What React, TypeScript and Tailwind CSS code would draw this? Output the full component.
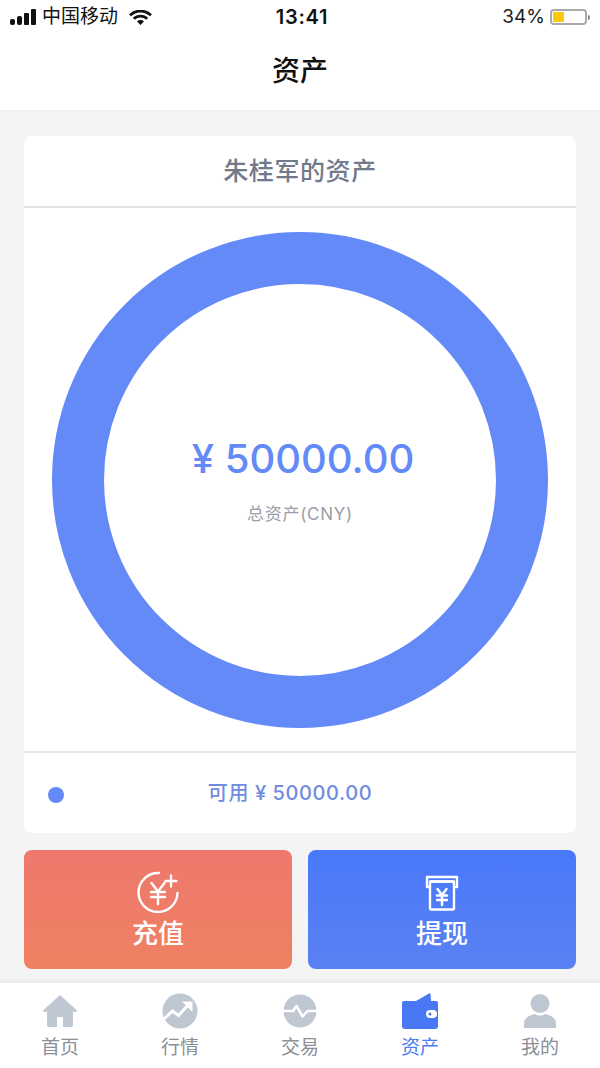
import React from "react";

const FONT = "font-['Inter','Noto_Sans_CJK_SC',sans-serif]";

const StatusBar = () => (
  <div className="relative flex h-[34px] items-center justify-between pl-[10px] pr-[10px]">
    <div className="flex items-center">
      <div className="flex items-end gap-[2px]">
        <span className="h-[6px] w-[5px] rounded-[2px] bg-[#111]" />
        <span className="h-[9px] w-[5px] rounded-[2px] bg-[#111]" />
        <span className="h-[12px] w-[5px] rounded-[1px] bg-[#111]" />
        <span className="h-[16px] w-[5px] rounded-[1px] bg-[#111]" />
      </div>
      <span className="ml-[6px] text-[19px] leading-[24px] text-[#111]">中国移动</span>
      <svg className="ml-[11px]" width="23" height="15" viewBox="0 0 23 15">
        <path d="M1 5.300a15 15 0 0 1 21 0" fill="none" stroke="#111" strokeWidth="2.800" />
        <path d="M4.800 8.800a9.500 9.500 0 0 1 13.400 0" fill="none" stroke="#111" strokeWidth="2.800" />
        <path d="M8 11.500a5 5 0 0 1 7 0L11.500 15z" fill="#111" />
      </svg>
    </div>
    <span className="absolute left-0 right-[-4px] text-center text-[20px] font-semibold leading-[24px] tracking-[0.8px] text-[#111]">13:41</span>
    <div className="flex items-center">
      <span className="text-[19px] leading-[24px] text-[#222]">34%</span>
      <div className="ml-[5px] h-[16px] w-[37px] rounded-[4px] border-2 border-[#aaa] p-[1px]">
        <div className="h-full w-[11px] rounded-[1px] bg-[#fcc90d]" />
      </div>
      <span className="ml-[1px] h-[5px] w-[2px] rounded-r-[2px] bg-[#888]" />
    </div>
  </div>
);

const RechargeIcon = () => (
  <svg width="42" height="42" viewBox="0 0 42 42" fill="none" stroke="#fff" strokeWidth="2.400" strokeLinecap="round">
    <path d="M22 2A19.500 19.500 0 1 0 40.500 22" />
    <path d="M14.500 12l6.500 8.500 6.500-8.500M14 21h14M14 26h14M21 20.500V33" />
    <path d="M28.500 10h11M34 4.500v11" />
  </svg>
);

const WithdrawIcon = () => (
  <svg width="34" height="36" viewBox="0 0 34 36" fill="none" stroke="#fff" strokeWidth="2.400" strokeLinejoin="round" strokeLinecap="round">
    <path d="M5 12H2V2h30v10h-3" />
    <path d="M5 6.500h24" />
    <rect x="5" y="6.500" width="24" height="28" rx="1.500" />
    <path d="M12.500 14l4.500 6 4.500-6M12 20.500h10M12 25h10M17 20v10" />
  </svg>
);

const HomeIcon = () => (
  <svg width="36" height="34" viewBox="0 0 36 34">
    <path d="M18 1L35 16.500l-.6 1.500H31v13a2 2 0 0 1-2 2H7a2 2 0 0 1-2-2V18H1.600L1 16.500z" fill="#bfc7d2" />
    <rect x="15" y="23" width="6" height="10" fill="#fff" />
  </svg>
);

const MarketIcon = () => (
  <svg width="36" height="36" viewBox="0 0 36 36">
    <circle cx="18" cy="18" r="17.500" fill="#bfc7d2" />
    <path d="M2 26l8.500-8 6 4.500L27 11" fill="none" stroke="#fff" strokeWidth="3" />
    <path d="M20 8.500h10.500V19z" fill="#fff" />
  </svg>
);

const TradeIcon = () => (
  <svg width="36" height="36" viewBox="0 0 36 36">
    <circle cx="18" cy="18" r="16.500" fill="#bfc7d2" />
    <path d="M0 18h11l3.500-5 6 10.500 5-5.500H36" fill="none" stroke="#fff" strokeWidth="2.600" strokeLinejoin="round" />
  </svg>
);

const WalletIcon = () => (
  <svg width="38" height="38" viewBox="0 0 38 38">
    <path d="M15 9L28 1.500a1 1 0 0 1 1.500.8L30 9z" fill="#4a78f5" />
    <path d="M3 9h32a2 2 0 0 1 2 2v23a3 3 0 0 1-3 3H4a3 3 0 0 1-3-3V11a2 2 0 0 1 2-2z" fill="#4a78f5" />
    <rect x="25" y="18" width="11" height="8" rx="4" fill="#fff" />
    <circle cx="29" cy="22" r="1.500" fill="#4a78f5" />
  </svg>
);

const UserIcon = () => (
  <svg width="34" height="36" viewBox="0 0 34 36">
    <circle cx="17" cy="10.500" r="9.500" fill="#bfc7d2" />
    <path d="M1 35v-5c0-5 6-8 11-9 3 2 7 2 10 0 5 1 11 4 11 9v5z" fill="#bfc7d2" />
  </svg>
);

const tabs = [
  { label: "首页", icon: <HomeIcon /> },
  { label: "行情", icon: <MarketIcon /> },
  { label: "交易", icon: <TradeIcon /> },
  { label: "资产", icon: <WalletIcon />, active: true },
  { label: "我的", icon: <UserIcon /> },
];

export default function App() {
  return (
    <div className={`flex h-[1068px] w-[600px] flex-col overflow-hidden bg-[#f4f4f4] ${FONT}`}>
      <div className="h-[111px] shrink-0 border-b border-[#efefef] bg-white">
        <StatusBar />
        <div className="mt-[19px] text-center text-[28px] font-medium leading-[36px] text-[#111]">资产</div>
      </div>

      <div className="flex-1 px-[24px] pt-[25px]">
        {/* asset card */}
        <div className="h-[697px] rounded-[8px] bg-white">
          <div className="flex h-[72px] items-center justify-center border-b-2 border-[#e3e4e8] text-[25px] font-medium leading-[32px] tracking-[0.6px] text-[#72798a]">
            朱桂军的资产
          </div>
          <div className="flex h-[545px] items-center justify-center border-b-2 border-[#e8e9ec]">
            <div className="flex h-[496px] w-[496px] flex-col items-center justify-center rounded-full border-[52px] border-[#648af8]">
              <div className="mb-[4px] ml-[6px] text-[40px] font-medium leading-[48px] text-[#648af8]">¥ 50000.00</div>
              <div className="mt-[16px] text-[17px] leading-[22px] tracking-[0.7px] text-[#9a9da5]">总资产(CNY)</div>
            </div>
          </div>
          <div className="relative flex h-[78px] items-center justify-center pr-[20px]">
            <span className="absolute left-[24px] top-[34px] h-[16px] w-[16px] rounded-full bg-[#648af8]" />
            <span className="mt-[2px] text-[20px] font-medium leading-[28px] tracking-[0.6px] text-[#6f8cdf]">可用 ¥ 50000.00</span>
          </div>
        </div>

        {/* actions */}
        <div className="mt-[17px] flex gap-[16px]">
          <div className="flex h-[119px] flex-1 flex-col items-center rounded-[8px] bg-gradient-to-b from-[#ee786d] to-[#ef8162] pt-[21px] text-white">
            <RechargeIcon />
            <span className="mt-[4px] text-[26px] font-medium leading-[34px]">充值</span>
          </div>
          <div className="flex h-[119px] flex-1 flex-col items-center rounded-[8px] bg-gradient-to-b from-[#4a78fb] to-[#5a81f2] pt-[25px] text-white">
            <WithdrawIcon />
            <span className="mt-[6px] text-[26px] font-medium leading-[34px]">提现</span>
          </div>
        </div>
      </div>

      {/* tab bar */}
      <div className="flex h-[85px] shrink-0 bg-white shadow-[0_-2px_6px_rgba(0,0,0,0.05)]">
        {tabs.map((t) => (
          <div key={t.label} className="flex flex-1 flex-col items-center pt-[9px]">
            <div className="flex h-[38px] items-center justify-center">{t.icon}</div>
            <span className={`mt-[5px] text-[19px] leading-[26px] ${t.active ? "text-[#4f7cf0]" : "text-[#8b8f96]"}`}>
              {t.label}
            </span>
          </div>
        ))}
      </div>
    </div>
  );
}
